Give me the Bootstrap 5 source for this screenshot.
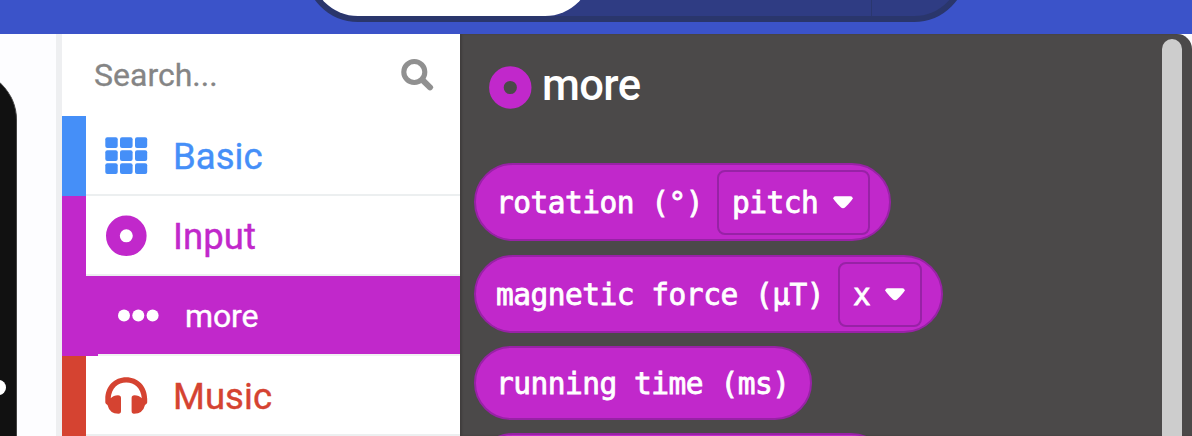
<!DOCTYPE html>
<html lang="en">
<head>
<meta charset="utf-8">
<meta name="viewport" content="width=device-width, initial-scale=1">
<title>Block editor</title>
<link href="https://cdn.jsdelivr.net/npm/bootstrap@5.3.0/dist/css/bootstrap.min.css" rel="stylesheet">
<style>
  body { height: 436px; font-family: Roboto, sans-serif; background: #fdfdff; }
  .topbar { height: 34px; background: #3b53c9; }
  .mode-switch { width: 662px; height: 106px; margin-left: 305px; border: 6px solid #2a366c; border-radius: 53px; background: #2f3c83; }
  .mode-active { width: 281px; border-radius: 47px; }
  .mode-divider { width: 1px; margin-left: 279px; background: #2a376f; }
  .sim { width: 62px; border-right: 6px solid #eeeff1; background: #fdfdff; }
  .board { width: 140px; height: 500px; margin: 36px 0 0 -123px; border-radius: 50px; background: #111; border-right: 1px solid #444; }
  .pin { width: 14px; height: 15px; margin: 310px 0 0 115px; background: #fff; }
  .toolbox { width: 398px; }
  .search { height: 82px; padding: 0 26px 0 32px; font-size: 32px; color: #858585; -webkit-text-stroke: .3px; }
  .cat { height: 80px; border-left: 24px solid var(--c); color: var(--c); padding-left: 19px; gap: 25px; font-size: 36.5px; box-shadow: inset 0 -2px #eceff0; -webkit-text-stroke: .4px; }
  .cat span { padding-top: 2px; letter-spacing: .05px; }
  .cat svg { flex-shrink: 0; }
  .cat-sub { border-left-width: 36px; padding-left: 18px; background: linear-gradient(#c128cb 78px, #f0f1f2 78px) padding-box, #c128cb; color: #fff; font-size: 32px; gap: 25px; box-shadow: none; }
  .cat-sub span { padding-top: 0; letter-spacing: -.1px; }
  .flyout { background: #4b4949; border-top-right-radius: 15px; box-shadow: inset 2px 0 2px #403e3e; }
  .flyout-head { height: 129px; padding: 32px 0 0 29px; gap: 10px; }
  .flyout-title { font-size: 43.5px; line-height: 39px; font-weight: 500; color: #fff; letter-spacing: -.6px; }
  .blocks { padding-left: 14px; gap: 13px; }
  .blk { height: 78px; flex-shrink: 0; border: 2px solid #9822a6; border-radius: 39px; background: #c128cb; color: #fff; padding-left: 20px;
         font: 29.5px "DejaVu Sans Mono", monospace; letter-spacing: -.5px; -webkit-text-stroke: .8px #fff; }
  .blk-first { margin-bottom: 1px; }
  .blk-pill { height: 74px; }
  .blk span { padding-top: 2px; }
  .field { height: 65px; border: 2px solid #9822a6; border-radius: 8px; padding-left: 13px; gap: 15px; }
  .field svg { stroke: none; }
  .scroll-thumb { width: 20px; margin: 5px 10px 0 0; border-radius: 10px 10px 0 0; background: #cdcdcd; }
</style>
<script src="https://cdn.jsdelivr.net/npm/bootstrap@5.3.0/dist/js/bootstrap.bundle.min.js"></script>
</head>
<body class="d-flex flex-column overflow-hidden">
  <header class="topbar d-flex align-items-end overflow-hidden flex-shrink-0">
    <div class="mode-switch d-flex flex-shrink-0" style="margin-bottom:12px">
      <div class="mode-active bg-white"></div>
      <div class="mode-divider"></div>
    </div>
  </header>
  <main class="d-flex flex-grow-1 overflow-hidden">
    <aside class="sim overflow-hidden flex-shrink-0">
      <div class="board d-flex"><div class="pin rounded-circle flex-shrink-0"></div></div>
    </aside>
    <nav class="toolbox bg-white flex-shrink-0">
      <div class="search d-flex align-items-center justify-content-between">
        <span>Search...</span>
        <svg width="34" height="34" viewBox="0 0 34 34" fill="none" stroke="#909090"><circle cx="14.3" cy="14" r="10.5" stroke-width="5.1"/><path d="M23 22.500 30 29.300" stroke-width="6" stroke-linecap="round"/></svg>
      </div>
      <div class="cat d-flex align-items-center" style="--c:#458ff8">
        <svg width="43" height="38" viewBox="0 0 43 38" fill="currentColor">
          <rect x=".3" y=".2" width="12.400" height="10.700" rx="2"/><rect x="15" y=".2" width="12.600" height="10.700" rx="2"/><rect x="30" y=".2" width="12.200" height="10.700" rx="2"/>
          <rect x=".3" y="13.200" width="12.400" height="10.700" rx="2"/><rect x="15" y="13.200" width="12.600" height="10.700" rx="2"/><rect x="30" y="13.200" width="12.200" height="10.700" rx="2"/>
          <rect x=".3" y="26.200" width="12.400" height="10.700" rx="2"/><rect x="15" y="26.200" width="12.600" height="10.700" rx="2"/><rect x="30" y="26.200" width="12.200" height="10.700" rx="2"/>
        </svg>
        <span>Basic</span>
      </div>
      <div class="cat d-flex align-items-center" style="--c:#c128cb">
        <svg width="43" height="43" viewBox="0 0 43 43" fill="none" stroke="currentColor"><circle cx="21.3" cy="20.800" r="13.4" stroke-width="13.8"/></svg>
        <span>Input</span>
      </div>
      <div class="cat cat-sub d-flex align-items-center" style="--c:#c128cb">
        <svg width="44" height="14" viewBox="0 0 44 14" fill="currentColor" stroke="none"><circle cx="8" cy="6.500" r="6"/><circle cx="22.3" cy="6.500" r="6"/><circle cx="36.6" cy="6.500" r="6"/></svg>
        <span>more</span>
      </div>
      <div class="cat d-flex align-items-center" style="--c:#d54331">
        <svg width="43" height="38" viewBox="0 0 43 38" fill="currentColor"><path d="M.3 22C.3 9 9.500 .2 21.200 .2S42.200 9 42.200 22V25.500Q42.200 26.800 40 28Q38 36.700 29 36.700Q26.600 36.700 26.600 34V21Q26.600 18.200 29.500 18.200Q34 18.200 36.800 21.200C36 11 29.500 5.400 21.200 5.400S6.500 11 5.700 21.200Q8.500 18.200 13 18.200Q16 18.200 16 21V34Q16 36.700 13.500 36.700Q4.500 36.700 2.500 28Q.3 26.800 .3 25.500Z"/></svg>
        <span>Music</span>
      </div>
    </nav>
    <section class="flyout d-flex flex-grow-1">
      <div class="flex-grow-1">
        <div class="flyout-head d-flex align-items-start">
          <svg width="43" height="43" viewBox="0 0 43 43" fill="none" stroke="#c128cb"><circle cx="21.3" cy="21.500" r="13.900" stroke-width="14.600"/></svg>
          <div class="flyout-title">more</div>
        </div>
        <div class="blocks d-flex flex-column">
          <div class="blk blk-first d-flex align-items-center" style="width:417px">
            <span style="width:221px">rotation (°)</span>
            <div class="field d-flex align-items-center" style="width:153px"><span>pitch</span>
              <svg width="20" height="13" viewBox="0 0 20 13" fill="#fff"><path d="M2.500 .2H17.500Q19.500 .2 19.700 2.200Q19.500 4 12.500 11Q10 13.500 7.500 11Q.5 4 .3 2.200Q.5 .2 2.500 .2Z"/></svg>
            </div>
          </div>
          <div class="blk d-flex align-items-center" style="width:469px">
            <span style="width:342px">magnetic force (µT)</span>
            <div class="field d-flex align-items-center" style="width:84px"><span>x</span>
              <svg width="20" height="13" viewBox="0 0 20 13" fill="#fff"><path d="M2.500 .2H17.500Q19.500 .2 19.700 2.200Q19.500 4 12.500 11Q10 13.500 7.500 11Q.5 4 .3 2.200Q.5 .2 2.500 .2Z"/></svg>
            </div>
          </div>
          <div class="blk blk-pill d-flex align-items-center" style="width:338px"><span>running time (ms)</span></div>
          <div class="blk" style="width:416px"></div>
        </div>
      </div>
      <div class="scroll-thumb"></div>
    </section>
  </main>
</body>
</html>
